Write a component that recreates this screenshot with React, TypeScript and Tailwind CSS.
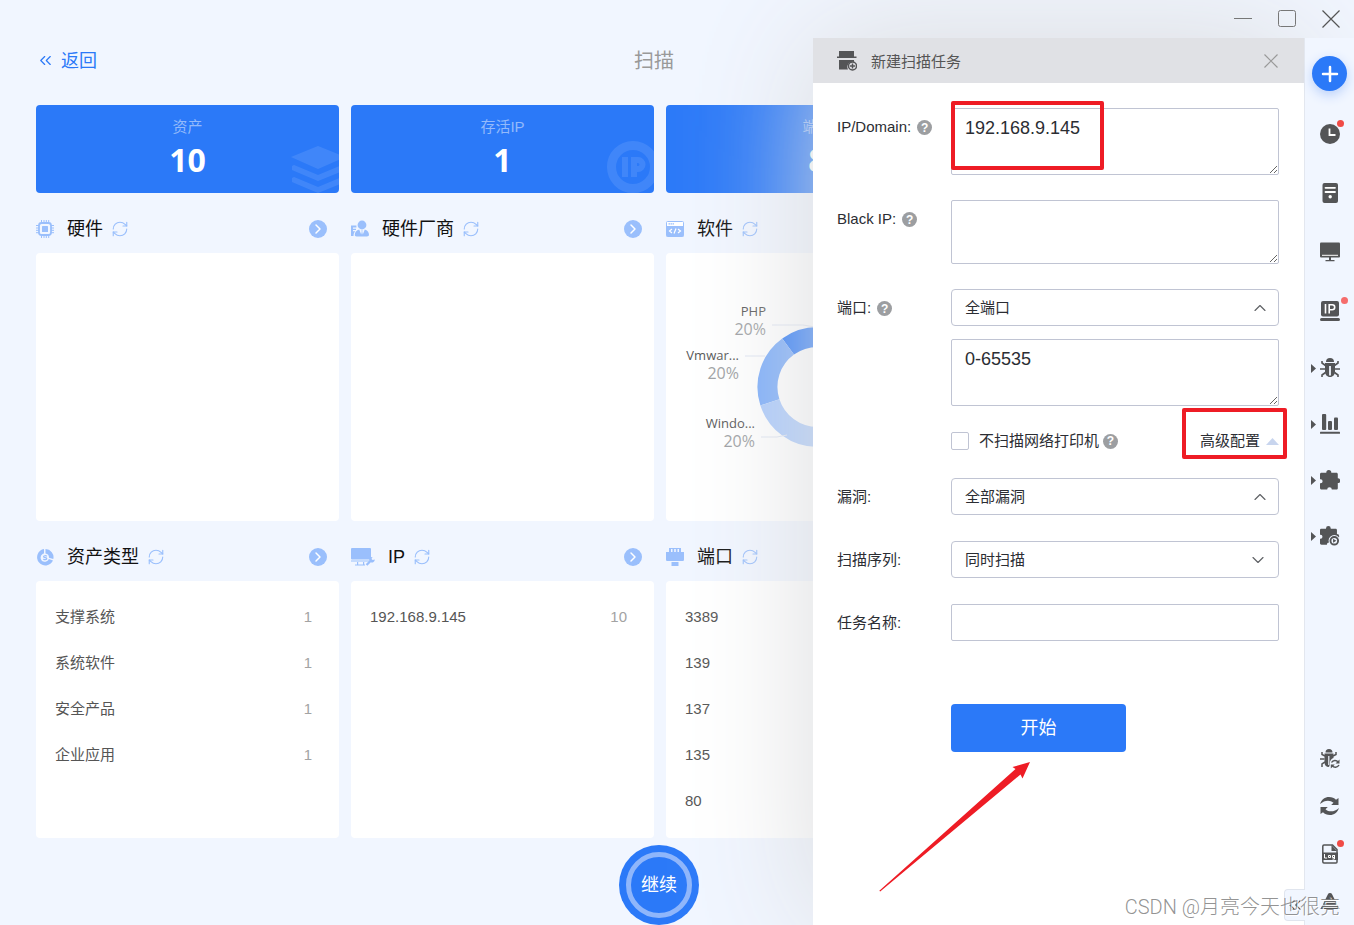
import { useState } from 'react';
import type { ReactNode } from 'react';
import { ChevronDown, ChevronRight, ChevronUp, ChevronsLeft, Plus, RefreshCw } from 'lucide-react';

/* ---------- panel icons ---------- */

function ChipIcon() {
  return (
    <svg className="w-[18px] h-[18px]" viewBox="0 0 18 18" fill="none" stroke="currentColor">
      <rect x="3" y="3" width="12" height="12" rx="2.5" strokeWidth="1.8" />
      <rect x="6" y="6" width="6" height="6" rx="0.6" fill="currentColor" stroke="none" />
      <path
        d="M5.5 0v3M8 0v3M10.300 0v3M12.700 0v3M5.500 15v3M8 15v3M10.300 15v3M12.700 15v3M0 5.500h3M0 8h3M0 10.300h3M0 12.700h3M15 5.500h3M15 8h3M15 10.300h3M15 12.700h3"
        strokeWidth="1"
      />
    </svg>
  );
}

function VendorIcon() {
  return (
    <svg className="w-[18px] h-[18px]" viewBox="0 0 18 18" fill="currentColor">
      <path d="M0 5.5h5.400v2H2v1.200h3V10H2v1.200h2.200C3 12.200 2.600 14 2.500 16H0z" />
      <circle cx="11" cy="5" r="4.400" />
      <path d="M8.200 9.600l2 5 .6-3-.6-1.200h1.600l-.6 1.200.6 3 2-5c2.600.7 4.200 2.600 4.200 5.200 0 1-.8 1.600-2 1.600H5.600c-1.200 0-1.800-.6-1.800-1.600 0-2.600 1.600-4.500 4.400-5.200z" />
    </svg>
  );
}

function CodeIcon() {
  return (
    <svg className="w-[18px] h-[18px]" viewBox="0 0 18 18" fill="none">
      <rect x="0.5" y="1.500" width="17" height="15" rx="1" fill="#fff" stroke="currentColor" />
      <rect x="0.500" y="6" width="17" height="10.500" fill="currentColor" />
      <path d="M2.500 3.800h6" stroke="currentColor" strokeWidth="1.200" strokeDasharray="1.500 0.500" />
      <path d="M6 9l-2.500 2L6 13M12 9l2.500 2-2.500 2M10 8.500l-2 5" stroke="#fff" strokeWidth="1.200" />
    </svg>
  );
}

function AssetIcon() {
  return (
    <svg className="w-[18px] h-[18px]" viewBox="0 0 18 18" fill="currentColor">
      <path d="M8 1v4.500a4.200 4.200 0 1 0 4.800 5.500l4.200 1.500A8.300 8.300 0 1 1 8 1z" />
      <path d="M9.500 1a8.200 8.200 0 0 1 7.800 10l-4.300-1.300A4.200 4.200 0 0 0 9.500 5.500z" />
      <path
        d="M10.800 8.200c-1-.8-3.300-.6-3.200.5.1 1.300 3.200.6 3.200 2 0 1.200-2.400 1.300-3.400.3"
        fill="none"
        stroke="currentColor"
        strokeWidth="1.200"
      />
    </svg>
  );
}

function MonitorToolIcon() {
  return (
    <svg className="w-6 h-[18px]" viewBox="0 0 24 18" fill="currentColor">
      <rect x="0" y="0" width="20" height="11.500" rx="1" />
      <path d="M0 12.500h18v1H0zM6 14h1.200v2.500H6zM12 14h1.200v2.500H12zM4 16.500h10v1H4z" />
      <path d="M23.800 11.500a3 3 0 0 1-4 2.800l-3.400 3.500-1.700-1.600 3.500-3.500a3 3 0 0 1 3.300-3.600l-1 2 1.200 1z" />
    </svg>
  );
}

function PortIcon() {
  return (
    <svg className="w-[18px] h-[18px]" viewBox="0 0 18 18" fill="currentColor">
      <path
        d="M3 0h12v4h3v7.500c0 1-.6 1.500-1.500 1.500h-15C.6 13 0 12.500 0 11.500V4h3zM5 1v3h1.500V1zm3.200 0v3h1.600V1zm3.300 0v3H13V1z"
        fillRule="evenodd"
      />
      <rect x="5.500" y="14" width="7" height="4" />
    </svg>
  );
}

/* ---------- sidebar icons ---------- */

function ClockIcon() {
  return (
    <svg className="w-5 h-5" viewBox="0 0 20 20">
      <circle cx="10" cy="10" r="10" fill="currentColor" />
      <path d="M9.500 4.500v6.500h6" fill="none" stroke="#fff" strokeWidth="1.800" />
    </svg>
  );
}

function ServerIcon() {
  return (
    <svg className="w-5 h-5" viewBox="0 0 20 20">
      <rect x="2.500" width="15.500" height="20" rx="2" fill="currentColor" />
      <path d="M5.500 4.800h9.500M5.500 9h9.500" stroke="#fff" strokeWidth="1.800" strokeLinecap="round" />
      <circle cx="10.200" cy="13.800" r="1.700" fill="#fff" />
    </svg>
  );
}

function ScreenIcon() {
  return (
    <svg className="w-5 h-5" viewBox="0 0 20 20">
      <rect y="0.500" width="20" height="15" rx="1" fill="currentColor" />
      <path d="M2 13.300h16" stroke="#fff" />
      <path d="M9 15h2v3h3.500v1.200h-9V18H9z" fill="currentColor" />
    </svg>
  );
}

function IpIcon() {
  return (
    <svg className="w-5 h-5" viewBox="0 0 20 20">
      <rect x="1" y="0" width="18" height="15.500" rx="2" fill="currentColor" />
      <rect x="0" y="17" width="20" height="3" rx="1.500" fill="currentColor" />
      <path d="M5.500 3v9.500M9.200 12.500V3.800h3a2.500 2.500 0 0 1 0 5h-3" fill="none" stroke="#fff" strokeWidth="1.600" />
    </svg>
  );
}

function BugIcon() {
  return (
    <svg className="w-5 h-5" viewBox="0 0 20 20">
      <path d="M6 4a4 4 0 0 1 8 0z" fill="currentColor" />
      <path d="M5 5h10v8.500c0 3-2 5.500-5 5.500s-5-2.500-5-5.500z" fill="currentColor" />
      <path d="M10 8v9.500" stroke="#f1f6ff" strokeWidth="1.800" />
      <path
        d="M5.500 7.500L2 5V3M14.500 7.500L18 5V3M5 11H0M15 11h5M5.500 14.500L2 17v2M14.500 14.500l3.500 2.500v2"
        fill="none"
        stroke="currentColor"
        strokeWidth="1.600"
      />
    </svg>
  );
}

function BarsIcon() {
  return (
    <svg className="w-5 h-5" viewBox="0 0 20 20" fill="currentColor">
      <rect x="2" y="0" width="4.200" height="16" rx="1" />
      <rect x="8" y="7" width="4" height="9" rx="1" />
      <rect x="14" y="3.500" width="4" height="12.500" rx="1" />
      <rect x="0" y="17.800" width="20" height="2" rx="0.500" />
    </svg>
  );
}

const PUZZLE =
  'M6.300 2.500a2.500 2.500 0 0 1 5 0v.3h5c1 0 1.500.6 1.500 1.500v4a2.400 2.400 0 0 1 0 4.800v5c0 1-.5 1.500-1.500 1.500h-4.500a2.300 2.300 0 0 0-4.600 0H1.600C.6 19.600 0 19 0 18.100v-4.800h.6a2 2 0 0 0 0-4H0v-5c0-1 .6-1.500 1.600-1.500h4.700z';

function PuzzleIcon() {
  return (
    <svg className="w-5 h-5" viewBox="0 0 20 20" fill="currentColor">
      <path d={PUZZLE} />
    </svg>
  );
}

function PuzzlePlayIcon() {
  return (
    <svg className="w-5 h-5" viewBox="0 0 21 21">
      <path d={PUZZLE} fill="currentColor" />
      <circle cx="15" cy="15.500" r="6" fill="#f1f6ff" />
      <circle cx="15" cy="15.500" r="4" fill="#f1f6ff" stroke="currentColor" strokeWidth="2" />
      <path d="M13.700 13.300l3.500 2.200-3.500 2.200z" fill="currentColor" />
    </svg>
  );
}

function BugSyncIcon() {
  return (
    <svg className="w-5 h-5" viewBox="0 0 20 20">
      <path
        d="M5.500 3.500a3.500 3.500 0 0 1 7 0zM4.500 4.500h9V9c-2.500 1-4 3-3.600 6.500L9 18c-3 0-4.500-2-4.500-4.500z"
        fill="currentColor"
      />
      <path d="M5 7L2 5.500V3M13 7l3-1.500V3M4.500 10H0M5 13l-3 1.800V18" fill="none" stroke="currentColor" strokeWidth="1.500" />
      <path d="M8.800 7v9" stroke="#f1f6ff" strokeWidth="1.200" />
      <path
        d="M11.500 13.500c1.500-2.600 5-2.600 6.500-.5M19 16c-1.500 2.800-5 2.800-6.800.8"
        fill="none"
        stroke="currentColor"
        strokeWidth="1.500"
      />
      <path d="M19.500 10.500v4h-4zM10.800 19.500v-4h4z" fill="currentColor" />
    </svg>
  );
}

function SyncIcon() {
  return (
    <svg className="w-5 h-5" viewBox="0 0 20 20" fill="currentColor">
      <path d="M0 8C1.500 3.500 5 1 9 1c3 0 5.300 1 7 2.800L18.500 2v7h-7.300l2.300-2.200C10 3.500 4.500 4 0 8z" />
      <path d="M19 12c-1.500 4.500-5 7-9 7-3 0-5.300-1-7-2.800L.5 18v-7h7.300l-2.300 2.200C9 16.500 14.500 16 19 12z" />
    </svg>
  );
}

function LogIcon() {
  return (
    <svg className="w-5 h-5" viewBox="0 0 20 20">
      <path
        d="M4 1h8.500L17 5.500V18c0 .6-.4 1-1 1H4c-.8 0-1.200-.5-1.200-1.200V2.200C2.800 1.500 3.200 1 4 1z"
        fill="none"
        stroke="currentColor"
        strokeWidth="1.500"
      />
      <path d="M11.500 1v6H17z" fill="currentColor" />
      <rect x="2" y="8.500" width="16" height="7.500" fill="currentColor" />
      <path
        d="M4.500 10v4h2.600M8.500 11.500h2v2h-2zM14.500 11.500h-2v2h2v-2.500 4h-2"
        fill="none"
        stroke="#fff"
        strokeWidth="1"
      />
    </svg>
  );
}

function AlertIcon() {
  return (
    <svg className="w-5 h-5" viewBox="0 0 20 20" fill="currentColor">
      <path d="M7.800 3.500a2.400 2.400 0 0 1 4.400 0l2.600 5.300H5.200zM4.700 9.800h10.600l1.900 3.900H2.800zM2.300 14.700h15.400l2 3.300H.3z" />
    </svg>
  );
}

/* ---------- shared pieces ---------- */

function HelpMark() {
  return (
    <span className="flex w-[15px] h-[15px] items-center justify-center rounded-full bg-[#9c9ea1] text-xs leading-none font-bold text-white">
      ?
    </span>
  );
}

function PanelTitle({ icon, title }: { icon: ReactNode; title: string }) {
  return (
    <div className="flex h-15 items-center pt-3 pr-3 text-[#9abffc]">
      <span className="mr-[13px]">{icon}</span>
      <h2 className="text-lg text-[#111]">{title}</h2>
      <button type="button" aria-label="refresh" className="ml-2">
        <RefreshCw className="w-[18px] h-[18px]" strokeWidth={1.5} />
      </button>
      <button
        type="button"
        aria-label="more"
        className="ml-auto flex w-[18px] h-[18px] items-center justify-center rounded-full bg-[#9abffc] text-white"
      >
        <ChevronRight className="w-4 h-4" strokeWidth={2.2} />
      </button>
    </div>
  );
}

interface Fila {
  name: string;
  count?: number;
}

function PanelList({ rows }: { rows: Fila[] }) {
  return (
    <ul className="flex-1 rounded bg-white px-[19px] pt-[13px] pb-[14px] text-[15px]">
      {rows.map(row => (
        <li key={row.name} className="flex h-[46px] items-center justify-between pr-2 text-[#555]">
          <span>{row.name}</span>
          <span className="text-[#a3a3a3]">{row.count}</span>
        </li>
      ))}
    </ul>
  );
}

function StatCard({ label, value, mark }: { label: string; value: number; mark?: ReactNode }) {
  return (
    <div className="relative h-22 overflow-hidden rounded bg-[#2b79f8] pt-3 text-center">
      <div className="text-[15px] leading-5 text-[#93bafb]">{label}</div>
      <div className="font-['Open_Sans',sans-serif] text-[32px] leading-[46px] font-bold text-white">{value}</div>
      {mark}
    </div>
  );
}

function SoftwareChart() {
  return (
    <svg className="w-[303px] h-[268px]" viewBox="0 0 303 268" fill="none">
      {/* five equal slices of 72 degrees */}
      <g strokeWidth="20">
        <path d="M122.100 93.500A50 50 0 0 1 180.900 93.500" stroke="#2b79f8" />
        <path d="M103.900 149.400A50 50 0 0 1 122.100 93.500" stroke="#7aacfa" />
        <path d="M151.500 184A50 50 0 0 1 103.900 149.400" stroke="#abcafc" />
      </g>
      <path d="M106 72h31l12 2M79 103h20M95 184h16l10-2" stroke="#dfe5f2" />
      <g className="font-['Open_Sans',sans-serif]" textAnchor="end">
        <g fontSize="13" fill="#555">
          <text x="100" y="63">PHP</text>
          <text x="73" y="107">Vmwar...</text>
          <text x="89" y="175">Windo...</text>
        </g>
        <g fontSize="16" fill="#9d9fa3">
          <text x="100" y="82">20%</text>
          <text x="73" y="126">20%</text>
          <text x="89" y="194">20%</text>
        </g>
      </g>
    </svg>
  );
}

function Field({ id, label, help, children }: { id: string; label: string; help?: boolean; children: ReactNode }) {
  return (
    <div className="flex items-start">
      <div className="flex h-[37px] w-[114px] shrink-0 items-center gap-[6px] pt-0.5">
        <label htmlFor={id}>{label}</label>
        {help && <HelpMark />}
      </div>
      <div className="relative min-w-0 flex-1">{children}</div>
    </div>
  );
}

function SelectBox({ id, option, open }: { id: string; option: string; open?: boolean }) {
  const Arrow = open ? ChevronUp : ChevronDown;
  return (
    <div className="relative">
      <select
        id={id}
        className="block h-[37px] w-full appearance-none rounded border border-[#c0c4d3] bg-white px-[13px] pt-0.5"
      >
        <option>{option}</option>
      </select>
      <Arrow
        className={`pointer-events-none absolute top-[9px] w-5 h-5 text-[#606266] ${open ? 'right-[9px]' : 'right-[11px]'}`}
        strokeWidth={1.4}
      />
    </div>
  );
}

function SideItem({ icon, caret, dot }: { icon: ReactNode; caret?: boolean; dot?: string }) {
  return (
    <button type="button" className="relative flex w-full flex-1 items-center gap-1 pl-[6px] text-[#545557]">
      <svg className="w-[5px] h-[9px]" viewBox="0 0 5 9" fill="currentColor">
        {caret && <path d="M0 0l5 4.500L0 9z" />}
      </svg>
      <span className="relative">
        {icon}
        {dot && <span className={`absolute h-[7px] w-[7px] rounded-full ${dot}`}></span>}
      </span>
    </button>
  );
}

/* ---------- scan task drawer ---------- */

function TaskDrawer() {
  const [targets, setTargets] = useState('192.168.9.145');
  const [blackIp, setBlackIp] = useState('');
  const [ports, setPorts] = useState('0-65535');
  const [taskName, setTaskName] = useState('');

  const areaClass = 'block w-full resize rounded-xs border border-[#c0c4d3] px-[13px] py-[7px] text-lg leading-6';

  return (
    <section className="absolute top-[38px] right-[50px] bottom-0 w-[491px] bg-white text-[15px] text-[#2b2d33] shadow-[0_0_120px_#dbdcde]">
      <header className="flex h-[45px] items-center bg-[#e0e1e5] pr-[25px] pl-6 text-[#555]">
        <svg className="mr-[14px] w-5 h-5" viewBox="0 0 20 20" fill="#545557">
          <path d="M2 0h15v5.500h2.500V7H0V5.500h2z" />
          <path d="M2 9h15v2a5.200 5.200 0 0 0-6 7.500H2z" />
          <circle cx="15.500" cy="15" r="4" fill="none" stroke="#545557" strokeWidth="1.500" />
          <path d="M15.500 12.500v5M13 15h5" stroke="#545557" strokeWidth="1.500" />
        </svg>
        <h2 className="pt-[3px]">新建扫描任务</h2>
        <button type="button" aria-label="close" className="ml-auto text-[#999]">
          <svg className="w-4 h-4" viewBox="0 0 16 16" stroke="currentColor" strokeWidth="1.200">
            <path d="M1.500 1.500l13 13M14.500 1.500l-13 13" />
          </svg>
        </button>
      </header>

      <form className="pt-[25px] pr-[25px] pl-6" onSubmit={e => e.preventDefault()}>
        <div className="flex flex-col gap-[25px]">
          <Field id="targets" label="IP/Domain:" help>
            <textarea
              id="targets"
              className={`${areaClass} h-[67px]`}
              value={targets}
              onChange={e => setTargets(e.target.value)}
            />
            <div className="pointer-events-none absolute -top-[7px] left-0 h-[69px] w-[153px] rounded-xs border-4 border-[#ee1c25]"></div>
          </Field>
          <Field id="black-ip" label="Black IP:" help>
            <textarea
              id="black-ip"
              className={`${areaClass} h-16`}
              value={blackIp}
              onChange={e => setBlackIp(e.target.value)}
            />
          </Field>
          <Field id="port-mode" label="端口:" help>
            <SelectBox id="port-mode" option="全端口" open />
            <textarea
              aria-label="ports"
              className={`${areaClass} mt-[13px] h-[67px]`}
              value={ports}
              onChange={e => setPorts(e.target.value)}
            />
          </Field>
        </div>

        <div className="ml-[114px] flex h-[72px] items-center pb-0.5">
          <input
            id="skip-printer"
            type="checkbox"
            className="w-[18px] h-[18px] appearance-none rounded-xs border border-[#c0c4d3] bg-white checked:bg-[#2b79f8]"
          />
          <label htmlFor="skip-printer" className="mr-1 ml-[10px]">
            不扫描网络打印机
          </label>
          <HelpMark />
          <button type="button" className="relative ml-auto flex items-center gap-[6px]">
            高级配置
            <svg className="w-[13px] h-[7px]" viewBox="0 0 13 7" fill="#c8d5ee">
              <path d="M6.500 0L13 7H0z" />
            </svg>
            <span className="pointer-events-none absolute -top-[22px] -right-2 -left-[18px] h-[51px] rounded-xs border-4 border-[#ee1c25]"></span>
          </button>
        </div>

        <div className="flex flex-col gap-[26px]">
          <Field id="vuln" label="漏洞:">
            <SelectBox id="vuln" option="全部漏洞" open />
          </Field>
          <Field id="order" label="扫描序列:">
            <SelectBox id="order" option="同时扫描" />
          </Field>
          <Field id="task-name" label="任务名称:">
            <input
              id="task-name"
              type="text"
              className="block h-[37px] w-full rounded-xs border border-[#c0c4d3] px-[13px]"
              value={taskName}
              onChange={e => setTaskName(e.target.value)}
            />
          </Field>
        </div>

        <div className="relative mt-[63px] ml-[114px]">
          <button type="submit" className="h-12 w-[175px] rounded bg-[#2b79f8] text-lg text-white">
            开始
          </button>
          <svg
            className="pointer-events-none absolute top-[58px] -left-[72px] w-[152px] h-[130px]"
            viewBox="0 0 152 130"
            fill="#ee1c25"
          >
            <path d="M151 0l-7.500 16.500-2-4L1.200 129.500l-.9-.7L136.500 7l-3-2z" />
          </svg>
        </div>
      </form>
    </section>
  );
}

export default function App() {
  return (
    <div className="relative flex min-h-screen flex-col overflow-hidden bg-[#f1f6ff] font-['Liberation_Sans','Noto_Sans_CJK_SC',sans-serif]">
      <div className="relative z-10 flex h-[38px] shrink-0 items-center justify-end gap-[26px] pr-[14px] text-[#777]">
        <button type="button" aria-label="minimize">
          <svg className="w-[18px] h-[18px]" viewBox="0 0 18 18" stroke="currentColor">
            <path d="M0 8.500h18" />
          </svg>
        </button>
        <button type="button" aria-label="maximize">
          <svg className="w-[18px] h-[18px]" viewBox="0 0 18 18" fill="none" stroke="currentColor">
            <rect x="0.500" y="0.500" width="17" height="16" rx="2" />
          </svg>
        </button>
        <button type="button" aria-label="close window">
          <svg className="w-[18px] h-[18px]" viewBox="0 0 18 18" stroke="#555" strokeWidth="1.200">
            <path d="M0.500 0.500l17 17M17.500 0.500l-17 17" />
          </svg>
        </button>
      </div>

      <div className="flex flex-1">
        <main className="flex min-w-0 flex-1 flex-col">
          <div className="grid h-[45px] grid-cols-[1fr_auto_1fr] items-center pr-8 pl-9">
            <a href="#" className="flex items-center gap-[6px] text-lg text-[#2b79f8]">
              <ChevronsLeft className="w-[19px] h-[19px]" strokeWidth={1.5} />
              返回
            </a>
            <h1 className="text-xl text-[#999]">扫描</h1>
          </div>

          <div className="mt-[22px] grid grid-cols-4 gap-x-3 pr-5 pl-9">
            <StatCard
              label="资产"
              value={10}
              mark={
                <svg className="absolute right-0 bottom-0 w-12 h-12 text-white/10" viewBox="0 0 48 48" fill="currentColor">
                  <path d="M27 1L54 12 27 24 0 12z" />
                  <path d="M1 21l2-1 24 10 24-10 3 2v3L27 36 1 25zM1 33l2-1 24 10 24-10 3 2v3L27 48 1 37z" />
                </svg>
              }
            />
            <StatCard
              label="存活IP"
              value={1}
              mark={
                <svg className="absolute right-0 bottom-0 w-12 h-[53px] text-white/10" viewBox="0 0 48 53">
                  <circle cx="27" cy="27" r="21.500" fill="none" stroke="currentColor" strokeWidth="9" />
                  <path
                    d="M19 17v20M28 37V20h4a4.500 4.500 0 0 1 0 9h-4"
                    fill="none"
                    stroke="currentColor"
                    strokeWidth="6"
                  />
                </svg>
              }
            />
            <StatCard label="端口" value={8} />
          </div>

          <div className="grid grid-cols-4 gap-x-3 pr-5 pl-9">
            <section>
              <PanelTitle icon={<ChipIcon />} title="硬件" />
              <div className="min-h-[268px] rounded bg-white"></div>
            </section>
            <section>
              <PanelTitle icon={<VendorIcon />} title="硬件厂商" />
              <div className="min-h-[268px] rounded bg-white"></div>
            </section>
            <section>
              <PanelTitle icon={<CodeIcon />} title="软件" />
              <div className="flex min-h-[268px] justify-center rounded bg-white">
                <SoftwareChart />
              </div>
            </section>
          </div>

          <div className="grid grid-cols-4 gap-x-3 pr-5 pl-9">
            <section className="flex flex-col">
              <PanelTitle icon={<AssetIcon />} title="资产类型" />
              <PanelList
                rows={[
                  { name: '支撑系统', count: 1 },
                  { name: '系统软件', count: 1 },
                  { name: '安全产品', count: 1 },
                  { name: '企业应用', count: 1 },
                ]}
              />
            </section>
            <section className="flex flex-col">
              <PanelTitle icon={<MonitorToolIcon />} title="IP" />
              <PanelList rows={[{ name: '192.168.9.145', count: 10 }]} />
            </section>
            <section className="flex flex-col">
              <PanelTitle icon={<PortIcon />} title="端口" />
              <PanelList rows={[{ name: '3389' }, { name: '139' }, { name: '137' }, { name: '135' }, { name: '80' }]} />
            </section>
          </div>

          <div className="mt-[7px] flex justify-center pr-[22px] pl-9">
            <button type="button" className="flex h-20 w-20 items-center justify-center rounded-full bg-[#2b79f8]">
              <span className="flex h-[66px] w-[66px] items-center justify-center rounded-full border-[5px] border-[#8fb6fb] text-lg text-white">
                继续
              </span>
            </button>
          </div>
        </main>

        <aside className="relative z-10 flex w-[50px] shrink-0 flex-col border-l border-[#e3e7ef] bg-[#f1f6ff]">
          <button
            type="button"
            aria-label="new task"
            className="mt-[18px] flex h-[35px] w-[35px] items-center justify-center self-center rounded-full bg-[#2b79f8] text-white shadow-[0_4px_12px_#b9d0fa]"
          >
            <Plus className="w-6 h-6" strokeWidth={2.5} />
          </button>
          <div className="mt-[13px] flex h-[236px] flex-col">
            <SideItem icon={<ClockIcon />} dot="-top-1 -right-1 bg-[#f04b46]" />
            <SideItem icon={<ServerIcon />} />
            <SideItem icon={<ScreenIcon />} />
            <SideItem icon={<IpIcon />} dot="-top-1 -right-2 bg-[#f56c6c]" />
          </div>
          <div className="flex h-56 flex-col">
            <SideItem icon={<BugIcon />} caret />
            <SideItem icon={<BarsIcon />} caret />
            <SideItem icon={<PuzzleIcon />} caret />
            <SideItem icon={<PuzzlePlayIcon />} caret />
          </div>
          <div className="mt-auto flex h-[190px] flex-col">
            <SideItem icon={<BugSyncIcon />} />
            <SideItem icon={<SyncIcon />} />
            <SideItem icon={<LogIcon />} dot="-top-1 -right-1 bg-[#f04b46]" />
            <SideItem icon={<AlertIcon />} />
          </div>
          <button
            type="button"
            aria-label="collapse"
            className="absolute right-full bottom-1 flex h-8 w-[21px] items-center justify-center rounded-l border border-r-0 border-[#e0e5ee] bg-[#f1f6ff] text-[#545557]"
          >
            <ChevronsLeft className="w-5 h-5" strokeWidth={1.5} />
          </button>
        </aside>
      </div>

      <TaskDrawer />

      <p className="pointer-events-none absolute right-[14px] bottom-1 z-20 font-['Roboto','Noto_Sans_CJK_SC',sans-serif] text-xl font-light text-[#777]/80 [text-shadow:1px_1px_0_#fff]">
        CSDN @月亮今天也很亮
      </p>
    </div>
  );
}
